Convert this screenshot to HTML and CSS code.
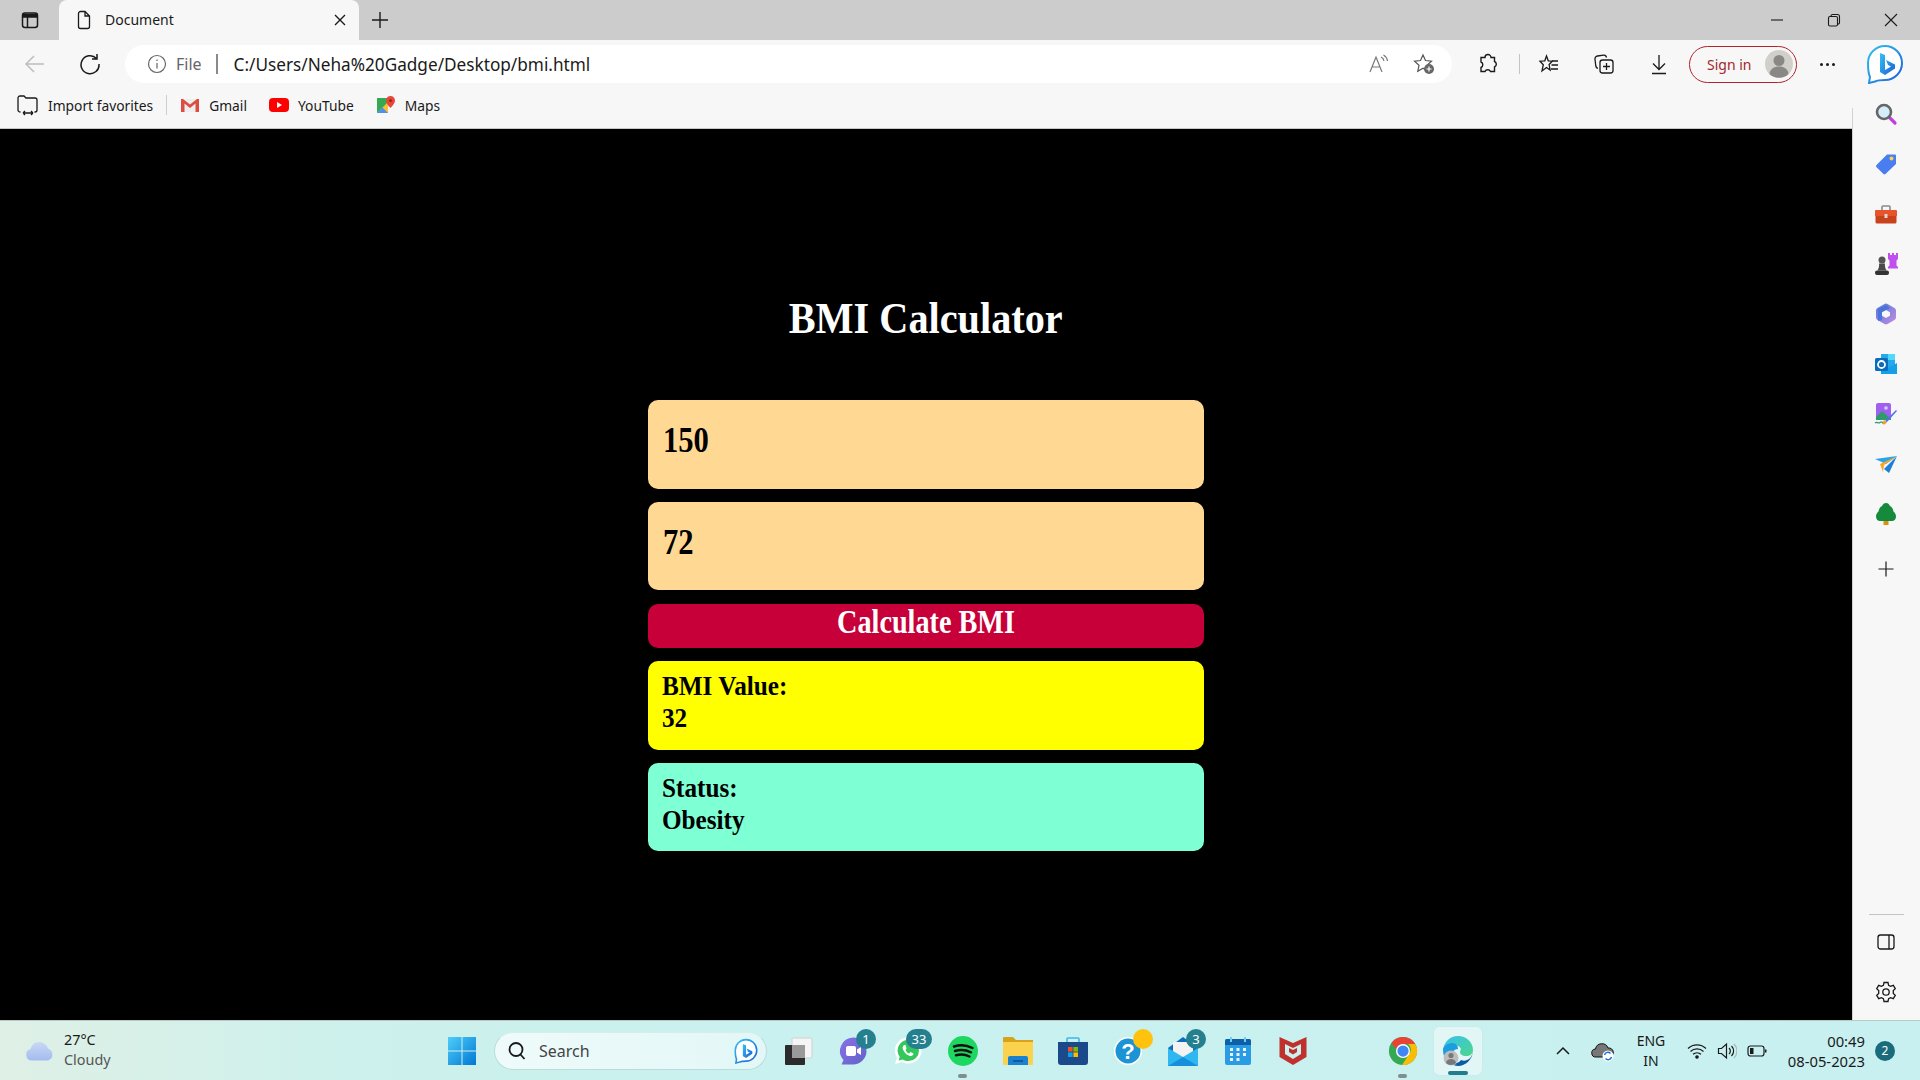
FILE: index.html
```html
<!DOCTYPE html>
<html lang="en">
<head>
    <meta charset="UTF-8">
    <title>Document</title>
    <link rel="stylesheet" href="styles.css">
</head>
<body>
    <svg class="defs" width="0" height="0">
        <defs>
            <linearGradient id="bing-grad" x1="0" y1="0" x2="1" y2="1">
                <stop offset="0" stop-color="#35c1f1"/>
                <stop offset="1" stop-color="#1b5fd8"/>
            </linearGradient>
            <linearGradient id="win-grad" x1="0" y1="0" x2="1" y2="1">
                <stop offset="0" stop-color="#4fcdf9"/>
                <stop offset="1" stop-color="#0078d4"/>
            </linearGradient>
            <linearGradient id="cloud-grad" x1="0" y1="0" x2="0" y2="1">
                <stop offset="0" stop-color="#c9d9f5"/>
                <stop offset="1" stop-color="#a3bcee"/>
            </linearGradient>
            <linearGradient id="m365-grad" x1="0" y1="0" x2="1" y2="1">
                <stop offset="0" stop-color="#4f7be0"/>
                <stop offset="1" stop-color="#c58be0"/>
            </linearGradient>
            <linearGradient id="purple-grad" x1="0" y1="0" x2="1" y2="1">
                <stop offset="0" stop-color="#8b6fe8"/>
                <stop offset="1" stop-color="#5f64c8"/>
            </linearGradient>
            <linearGradient id="edge-grad" x1="0" y1="0" x2="1" y2="1">
                <stop offset="0" stop-color="#35c1f1"/>
                <stop offset="1" stop-color="#4ed68a"/>
            </linearGradient>
        </defs>
    </svg>

    <div class="tabstrip">
        <div class="strip-btn">
            <svg class="ico-20" viewBox="0 0 20 20" fill="none" stroke="#1a1a1a" stroke-width="1.5"><rect x="2.5" y="3" width="15" height="14.5" rx="2.5"/><path d="M3 4.5h14v2.500H3z" fill="#1a1a1a"/><path d="M7.5 7v10"/></svg>
        </div>
        <div class="tab">
            <svg class="ico-20" viewBox="0 0 20 20" fill="none" stroke="#1a1a1a" stroke-width="1.3"><path d="M4.5 3.5a2 2 0 0 1 2-2H11l4.5 4.5v10.500a2 2 0 0 1-2 2h-7a2 2 0 0 1-2-2zM11 1.500V6h4.500"/></svg>
            <span class="tab-title">Document</span>
            <svg class="tab-close" viewBox="0 0 12 12" fill="none" stroke="#1a1a1a" stroke-width="1.4"><path d="M1 1l10 10M11 1L1 11"/></svg>
        </div>
        <div class="new-tab">
            <svg class="ico-20" viewBox="0 0 20 20" fill="none" stroke="#1a1a1a" stroke-width="1.4"><path d="M10 2v16M2 10h16"/></svg>
        </div>
        <div class="window-controls">
            <svg class="win-ctl" viewBox="0 0 14 14" fill="none" stroke="#1a1a1a" stroke-width="1.1"><path d="M1 7h12"/></svg>
            <svg class="win-ctl" viewBox="0 0 14 14" fill="none" stroke="#1a1a1a" stroke-width="1.1"><rect x="1.5" y="3.5" width="9" height="9.5" rx="1.5"/><path d="M4 3.500V3a1.500 1.500 0 0 1 1.500-1.500h5a2 2 0 0 1 2 2v6a1.500 1.500 0 0 1-2 1.500"/></svg>
            <svg class="win-ctl" viewBox="0 0 14 14" fill="none" stroke="#1a1a1a" stroke-width="1.1"><path d="M1 1l12 12M13 1L1 13"/></svg>
        </div>
    </div>

    <div class="toolbar">
        <div class="nav-btn">
            <svg class="ico-22" viewBox="0 0 22 22" fill="none" stroke="#bdbdbd" stroke-width="1.5"><path d="M20 11H2M10 3l-8 8 8 8"/></svg>
        </div>
        <div class="nav-btn nav-reload">
            <svg class="ico-22" viewBox="0 0 22 22" fill="none" stroke="#1a1a1a" stroke-width="1.5"><path d="M17.500 5.500A9 9 0 1 0 20 11M18 1v5h-5"/></svg>
        </div>
        <div class="address">
            <svg class="ico-20" viewBox="0 0 20 20" fill="none" stroke="#666" stroke-width="1.2"><circle cx="10" cy="10" r="8.5"/><path d="M10 9v5.500M10 5.500v1.600"/></svg>
            <span class="addr-file">File</span>
            <span class="addr-sep"></span>
            <span class="addr-url">C:/Users/Neha%20Gadge/Desktop/bmi.html</span>
            <div class="addr-actions">
                <div class="addr-btn">
                    <svg class="ico-22" viewBox="0 0 22 22" fill="none" stroke="#777" stroke-width="1.2"><path d="M2 19L8 4l6 15M4.500 14h7M13 4a5 5 0 0 1 3 4M15.500 2a8 8 0 0 1 4 6"/></svg>
                </div>
                <div class="addr-btn">
                    <svg class="ico-22" viewBox="0 0 22 22"><path d="M10 2l2.500 5.500 6 .7-4.500 4 1.200 6-5.200-3-5.200 3 1.200-6-4.500-4 6-.7z" fill="none" stroke="#555" stroke-width="1.2"/><circle cx="16" cy="16" r="5" fill="#666"/><path d="M16 13.500v5M13.500 16h5" stroke="#fff" stroke-width="1.2"/></svg>
                </div>
            </div>
        </div>
        <div class="tool-ext">
            <svg class="ico-22" viewBox="0 0 22 22" fill="none" stroke="#1a1a1a" stroke-width="1.4"><path d="M8 4.500a3 3 0 0 1 6 0h3.500v4a3 3 0 0 1 0 5.500v4.500h-4a3 3 0 0 0-5.500 0h-4v-4a3 3 0 0 0 0-5.500v-4.500z"/></svg>
        </div>
        <span class="tool-divider"></span>
        <div class="tool-btn">
            <svg class="ico-22" viewBox="0 0 22 22" fill="none" stroke="#1a1a1a" stroke-width="1.3"><path d="M8.500 3l1.800 4.800 4 .4-3.200 3.300 1 5.500-3.600-2.500-4.500 3.500 1.300-6.300L2 8.200l4.800-.4zM14 8h6M13.500 12H20M13 16h7"/></svg>
        </div>
        <div class="tool-btn">
            <svg class="ico-22" viewBox="0 0 22 22" fill="none" stroke="#1a1a1a" stroke-width="1.3"><rect x="7" y="7" width="13" height="13" rx="2.5"/><path d="M13.500 10v7M10 13.500h7M5 15.500c-1.500-.5-2-1.500-2.200-2.500L2 6.500A3 3 0 0 1 4.500 3l6-.8c1.500-.2 2.700.8 3 2.300"/></svg>
        </div>
        <div class="tool-btn">
            <svg class="ico-22" viewBox="0 0 22 22" fill="none" stroke="#1a1a1a" stroke-width="1.3"><path d="M11 2v14M5 10.500l6 6 6-6M4 20.500h14"/></svg>
        </div>
        <div class="signin">
            <span>Sign in</span>
            <svg class="signin-avatar" viewBox="0 0 28 28"><circle cx="14" cy="14" r="14" fill="#d1cfca"/><circle cx="14" cy="10.500" r="5.500" fill="#8a8884"/><path d="M4.500 24c.5-5 4.500-7.500 9.500-7.500s9 2.500 9.500 7.500a14 14 0 0 1-19 0z" fill="#8a8884"/></svg>
        </div>
        <div class="tool-more"><i></i><i></i><i></i></div>
        <div class="tool-bing">
            <svg class="bing-big" viewBox="0 0 38 40"><path d="M19 2a17 17 0 0 1 0 34c-4 0-7 0-10 1.500L3 39l1-6C2.500 30 2 25 2 19A17 17 0 0 1 19 2z" fill="#fff" stroke="url(#bing-grad)" stroke-width="2"/><path d="M14 9l5 2v15l6-3.500-3-1.500-2-5 9 4.500v4L19 31l-5-3z" fill="url(#bing-grad)"/></svg>
        </div>
    </div>

    <div class="browser-row">
        <div class="content-col">
            <div class="bookmarks">
                <div class="bm bm-import">
                    <svg class="ico-22" viewBox="0 0 22 22" fill="none" stroke="#1a1a1a" stroke-width="1.3"><path d="M3.500 18H3a2 2 0 0 1-2-2V4a2 2 0 0 1 2-2h4l2 2h9a2 2 0 0 1 2 2v10a2 2 0 0 1-2 2h-.5M6 19h10M6 19l2-2M6 19l2 2M16 19l-2-2M16 19l-2 2"/></svg>
                    <span>Import favorites</span>
                </div>
                <span class="bm-divider"></span>
                <div class="bm bm-gmail">
                    <svg class="ico-20" viewBox="0 0 20 20"><path d="M1 4h18v13H1z" fill="#eee"/><path d="M1 4v13h3.500V8.500L10 13l5.500-4.500V17H19V4h-2l-7 5.500L3 4z" fill="#dc4e41"/></svg>
                    <span>Gmail</span>
                </div>
                <div class="bm bm-yt">
                    <svg class="ico-20" viewBox="0 0 20 20"><rect y="3" width="20" height="14" rx="4" fill="#f00"/><path d="M8 7l5 3-5 3z" fill="#fff"/></svg>
                    <span>YouTube</span>
                </div>
                <div class="bm bm-maps">
                    <svg class="ico-20" viewBox="0 0 20 20"><path d="M1 3h11v15H1z" fill="#35a853"/><path d="M1 18L12 7v11z" fill="#fbc02d"/><path d="M1 18l5.500-5.500L12 18z" fill="#4c8df6"/><path d="M14.500 1a4.500 4.500 0 0 0-4.500 4.500c0 3 4.500 7.500 4.500 7.500S19 8.500 19 5.500A4.500 4.500 0 0 0 14.500 1z" fill="#e8453c"/><circle cx="14.500" cy="5.500" r="1.600" fill="#a52714"/></svg>
                    <span>Maps</span>
                </div>
            </div>
            <main class="page">
                <h1 class="page-title"><span>BMI Calculator</span></h1>
                <div class="card card-input"><span class="big-val">150</span></div>
                <div class="card card-input"><span class="big-val">72</span></div>
                <button class="card calc-btn"><span>Calculate BMI</span></button>
                <div class="card card-bmi"><span class="res-line">BMI Value:</span><span class="res-line">32</span></div>
                <div class="card card-status"><span class="res-line">Status:</span><span class="res-line">Obesity</span></div>
            </main>
        </div>
        <aside class="sidebar">
            <div class="side-btn">
                <svg class="ico-24" viewBox="0 0 24 24"><path d="M14 14l7 7" stroke="#c03fe0" stroke-width="3.2" stroke-linecap="round"/><circle cx="10" cy="10" r="7" fill="#d5ecfa" stroke="#666" stroke-width="2.6"/></svg>
            </div>
            <div class="side-btn">
                <svg class="ico-24" viewBox="0 0 24 24"><path d="M13 2.500h8a1 1 0 0 1 1 1V12L11.500 22a1.500 1.500 0 0 1-2 0l-7-6.800a1.500 1.500 0 0 1 0-2.200z" fill="#4a7df0"/><circle cx="17.500" cy="6.500" r="2" fill="#f4d44a"/></svg>
            </div>
            <div class="side-btn">
                <svg class="ico-24" viewBox="0 0 24 24"><path d="M8 8V5a1 1 0 0 1 1-1h6a1 1 0 0 1 1 1v3" fill="none" stroke="#8a8a8a" stroke-width="1.6"/><path d="M1 9a1 1 0 0 1 1-1h20a1 1 0 0 1 1 1v5H1z" fill="#e8542a"/><path d="M1.500 14h21v6a1.500 1.500 0 0 1-1.500 1.500H3A1.500 1.500 0 0 1 1.500 20z" fill="#c8431c"/><rect x="10.500" y="12" width="3" height="4" fill="#d8d8d8"/></svg>
            </div>
            <div class="side-btn">
                <svg class="ico-24" viewBox="0 0 24 24"><path d="M14 1h2v2h2V1h2v2h2V1h2v6l-1.500 1.500v5l1.500 1.500v1.500H14V15l1.500-1.500v-5L14 7z" fill="#c14ff0"/><circle cx="8" cy="8" r="3.500" fill="#555"/><path d="M5 11.500h6c-.5 3 .5 5 1.500 7h-9c1-2 2-4 1.500-7z" fill="#4a4a4a"/><rect x="1" y="18.500" width="14" height="4.500" rx="2" fill="#333"/></svg>
            </div>
            <div class="side-btn">
                <svg class="ico-24" viewBox="0 0 24 24"><path d="M10.500 2a3 3 0 0 1 3 0l7 4a3 3 0 0 1 1.500 2.500v7a3 3 0 0 1-1.500 2.500l-7 4a3 3 0 0 1-3 0l-7-4A3 3 0 0 1 2 15.500v-7A3 3 0 0 1 3.500 6z" fill="url(#m365-grad)"/><path d="M12 8l4 2.300v3.400L12 16l-4-2.300v-3.400z" fill="#f7f7f7"/><path d="M4 7l8-4 4 3-8 4v8l-4 1z" fill="#3f6fd8" opacity=".75"/></svg>
            </div>
            <div class="side-btn">
                <svg class="ico-24" viewBox="0 0 24 24"><path d="M7 2h14v20H7z" fill="#28a8ea"/><path d="M14 2h7v6h-7z" fill="#50d9ff"/><path d="M7 12l7 4 9-5v11H7z" fill="#14a0e8"/><rect x="1" y="6" width="13" height="13" rx="1.5" fill="#0a6cbd"/><circle cx="7.5" cy="12.5" r="3.500" fill="none" stroke="#fff" stroke-width="1.8"/></svg>
            </div>
            <div class="side-btn">
                <svg class="ico-24" viewBox="0 0 24 24"><rect x="2" y="1" width="15" height="17" rx="2" fill="#a060ef"/><path d="M2 15l6-6 9 8v1H2z" fill="#2f9a6c"/><circle cx="12" cy="6" r="1.800" fill="#e0c4ff"/><path d="M11 19L22 8l1 1-10 11z" fill="#5570f0"/><path d="M10 18l3 2.500-2.500 2-2.500-.5z" fill="#f0a020"/><path d="M1 21c2-2 3 1 5-.5s2 .5 3 0" fill="none" stroke="#2f9a6c" stroke-width="1.2"/></svg>
            </div>
            <div class="side-btn">
                <svg class="ico-24" viewBox="0 0 24 24"><path d="M1 7l22-3-11 8z" fill="#2aa3ee"/><path d="M23 4l-8 17-5-4z" fill="#1b7fd8"/><path d="M23 4L6 12l3 8 1-7z" fill="#f5a623"/></svg>
            </div>
            <div class="side-btn">
                <svg class="ico-24" viewBox="0 0 24 24"><rect x="9.5" y="18" width="5" height="5" fill="#d99010"/><path d="M12 1c2 0 3 1 4 3 2 1 3 3 3.500 5.500 1.500 1 2.500 3 2.500 5 0 3-2 4.500-4 4.500H6c-2 0-4-1.500-4-4.500 0-2 1-4 2.500-5C5 7 6 5 8 4c1-2 2-3 4-3z" fill="#168a3c"/></svg>
            </div>
            <div class="side-btn side-plus">
                <svg class="ico-20" viewBox="0 0 20 20" fill="none" stroke="#1a1a1a" stroke-width="1.2"><path d="M10 2.500v15M2.500 10h15"/></svg>
            </div>
            <div class="side-foot">
                <span class="side-line"></span>
                <div class="side-btn">
                    <svg class="ico-20" viewBox="0 0 20 20" fill="none" stroke="#1a1a1a" stroke-width="1.3"><rect x="2" y="3" width="16" height="14" rx="2.5"/><path d="M13 3v14"/></svg>
                </div>
                <div class="side-btn">
                    <svg class="ico-24" viewBox="0 0 24 24" fill="none" stroke="#1a1a1a" stroke-width="1.3"><circle cx="12" cy="12" r="3.2"/><path d="M10 2.500h4l.6 2.800 2 1 2.700-1 2 3.400-2 1.900v2.800l2 1.900-2 3.400-2.700-1-2 1-.6 2.800h-4l-.6-2.800-2-1-2.700 1-2-3.400 2-1.900V10.600l-2-1.900 2-3.400 2.700 1 2-1z"/></svg>
                </div>
            </div>
        </aside>
    </div>

    <footer class="taskbar">
        <div class="weather">
            <svg class="weather-ico" viewBox="0 0 30 20"><path d="M7 19.500a5.800 5.800 0 0 1-1.500-11.400 9 9 0 0 1 17.500-.6A6.300 6.300 0 0 1 23 19.500z" fill="url(#cloud-grad)"/></svg>
            <div class="weather-text">
                <span>27°C</span>
                <span class="weather-sub">Cloudy</span>
            </div>
        </div>
        <div class="app">
            <svg class="ico-30" viewBox="0 0 30 30" fill="url(#win-grad)"><path d="M1 1h13.500v13.500H1zM15.500 1H29v13.500H15.500zM1 15.500h13.500V29H1zM15.500 15.500H29V29H15.500z"/></svg>
        </div>
        <div class="search">
            <svg class="ico-20" viewBox="0 0 20 20" fill="none" stroke="#1a1a1a" stroke-width="1.8"><circle cx="9" cy="8.5" r="6.5"/><path d="M13.500 13.500l4 4.500"/></svg>
            <span class="search-text">Search</span>
            <svg class="search-bing" viewBox="0 0 38 40"><path d="M19 2a17 17 0 0 1 0 34c-4 0-7 0-10 1.500L3 39l1-6C2.500 30 2 25 2 19A17 17 0 0 1 19 2z" fill="#fff" stroke="url(#bing-grad)" stroke-width="2.5"/><path d="M14 9l5 2v15l6-3.500-3-1.500-2-5 9 4.500v4L19 31l-5-3z" fill="url(#bing-grad)"/></svg>
        </div>
        <div class="app app-first">
            <svg class="ico-30" viewBox="0 0 30 30"><rect x="9" y="2" width="20" height="20" rx="1" fill="#f5f5f5" stroke="#d0d0d0"/><rect x="2" y="9" width="20" height="20" rx="1" fill="#2b2b2b"/><rect x="9" y="9" width="13" height="13" fill="#9a9a9a"/></svg>
        </div>
        <div class="app">
            <svg class="ico-30" viewBox="0 0 30 30"><path d="M15 1.500a13.500 13.500 0 0 1 0 27H3.500l2-4.500A13.500 13.500 0 0 1 15 1.500z" fill="url(#purple-grad)"/><rect x="8" y="10" width="10" height="10" rx="2" fill="#fff"/><path d="M19 13.500l4-2.500v8l-4-2.500z" fill="#fff"/></svg>
            <span class="badge badge-teams">1</span>
        </div>
        <div class="app">
            <svg class="ico-30" viewBox="0 0 30 30"><path d="M15.500 1.500a13 13 0 0 1 0 26c-2.500 0-4.500-.5-6.500-1.500L2 28l2-6.500A13 13 0 0 1 15.500 1.500z" fill="#fff"/><path d="M15.500 4a10.500 10.500 0 0 1 0 21c-2.200 0-4-.5-5.800-1.500l-4 1 1-3.800A10.500 10.500 0 0 1 15.500 4z" fill="#33c75c"/><path d="M11 9c-1.500 1-2 3-.5 5.500 1.500 3 4 5 6.500 5.500 2 .3 3.500-1 3.500-2.500l-3-1.500-1.500 1.500c-1.500-.5-3-2-3.500-3.500l1-1.500L12.500 9z" fill="#fff"/></svg>
            <span class="badge badge-wa">33</span>
        </div>
        <div class="app">
            <svg class="ico-30" viewBox="0 0 30 30" fill="none"><circle cx="15" cy="15" r="15" fill="#1ed760"/><path d="M6 10.500c6-1.800 13-1.300 18.500 1.500M7 15c5-1.400 11-1 16 1.300M8 19.300c4.500-1.100 9.500-.8 13.500 1.200" stroke="#111" stroke-width="2.5" stroke-linecap="round"/></svg>
            <span class="app-dot"></span>
        </div>
        <div class="app">
            <svg class="ico-30" viewBox="0 0 30 30"><path d="M0 2a1 1 0 0 1 1-1h9l3 3h17v6H0z" fill="#d9a21b"/><path d="M0 6h30v22a1 1 0 0 1-1 1H1a1 1 0 0 1-1-1z" fill="#fbd24e"/><path d="M5 29v-7a2 2 0 0 1 2-2h16a2 2 0 0 1 2 2v7z" fill="#1a80d0"/><path d="M10 25h10" stroke="#0b4f8f" stroke-width="1.5"/></svg>
        </div>
        <div class="app">
            <svg class="ico-30" viewBox="0 0 30 30"><path d="M9 6V3a1 1 0 0 1 1-1h10a1 1 0 0 1 1 1v3" fill="none" stroke="#3cb8e8" stroke-width="1.6"/><path d="M0 6h30v20a3 3 0 0 1-3 3H3a3 3 0 0 1-3-3z" fill="#1a4a8a"/><rect x="10" y="11" width="4.6" height="4.6" fill="#f25022"/><rect x="15.4" y="11" width="4.6" height="4.6" fill="#7fba00"/><rect x="10" y="16.4" width="4.6" height="4.6" fill="#00a4ef"/><rect x="15.4" y="16.4" width="4.6" height="4.6" fill="#ffb900"/></svg>
        </div>
        <div class="app">
            <svg class="ico-30" viewBox="0 0 30 30"><circle cx="15" cy="15" r="14" fill="#fff"/><circle cx="15" cy="15" r="12.5" fill="#1c93d4"/><text class="help-mark" x="15" y="23" text-anchor="middle">?</text></svg>
            <span class="badge badge-help"></span>
        </div>
        <div class="app">
            <svg class="ico-30" viewBox="0 0 30 30"><path d="M0 12L15 1l15 11v18H0z" fill="#0f6cbd"/><path d="M5 6h20v13l-10 6-10-6z" fill="#f2f2f2"/><path d="M0 12l15 9 15-9v18H0z" fill="#2fb8ef"/><path d="M0 30l15-9 15 9z" fill="#1690dc"/></svg>
            <span class="badge badge-mail">3</span>
        </div>
        <div class="app">
            <svg class="ico-30" viewBox="0 0 30 30"><rect x="2" y="3" width="26" height="26" rx="2" fill="#2a9be5"/><path d="M2 5a2 2 0 0 1 2-2h22a2 2 0 0 1 2 2v4H2z" fill="#0f5fa8"/><path d="M8 1v5M22 1v5" stroke="#6cd0f5" stroke-width="2"/><path d="M7 12h3v3H7zM13.500 12h3v3h-3zM20 12h3v3h-3zM7 17h3v3H7zM13.500 17h3v3h-3zM20 17h3v3h-3zM7 22h3v3H7zM13.500 22h3v3h-3z" fill="#e6f4fd"/></svg>
        </div>
        <div class="app">
            <svg class="ico-30" viewBox="0 0 30 30"><path d="M1.500 1L15 7 28.500 1v20L15 29 1.500 21z" fill="#c0312e"/><path d="M7 8l8 4 8-4v10l-8 5-8-5z" fill="#c9f1ef"/><path d="M11 12l4 2 4-2v4l-4 2.500-4-2.500z" fill="#c0312e"/></svg>
        </div>
        <div class="app app-chrome">
            <svg class="ico-30" viewBox="0 0 32 32"><circle cx="16" cy="16" r="15" fill="#34a853"/><path d="M16 1a15 15 0 0 1 13 7.500H16a7.500 7.500 0 0 0-7 5L3.500 7.700A15 15 0 0 1 16 1z" fill="#ea4335"/><path d="M29 8.500A15 15 0 0 1 15 31l7-11a7.500 7.500 0 0 0-.5-11.500z" fill="#fbbc04"/><circle cx="16" cy="16" r="7.500" fill="#fff"/><circle cx="16" cy="16" r="6" fill="#4285f4"/></svg>
            <span class="app-dot"></span>
        </div>
        <div class="app">
            <div class="edge-tile">
                <svg class="ico-32" viewBox="0 0 32 32"><path d="M1 15C2 7 8 1 16 1c8 0 15 6 15 14 0 4-3 6-7 6s-6-2-6-4c0-1 .5-2 1-3-1-3-4-4-7-3-5 1-9 5-11 4z" fill="url(#edge-grad)"/><path d="M31 17c-1 7-7 14-15 14-3 0-5-1-7-3 4 1 8 0 10-3 2 1 4 1 6 0 3-1 5-4 6-8z" fill="#0c59a4"/><path d="M1 15c0-3 4-7 9-7 4 0 6 3 6 6-4 0-6 3-6 7 0 4 2 7 5 9C7 30 1 24 1 15z" fill="#1b9de2"/><circle cx="9" cy="23" r="7.5" fill="#bdbdbd"/><circle cx="9" cy="20.5" r="2.6" fill="#777"/><path d="M4 28c.5-3 2.500-4 5-4s4.500 1 5 4a7.500 7.500 0 0 1-10 0z" fill="#777"/></svg>
                <span class="edge-bar"></span>
            </div>
        </div>
        <div class="tray">
            <div class="tray-ico">
                <svg class="ico-16" viewBox="0 0 16 16" fill="none" stroke="#1a1a1a" stroke-width="1.5"><path d="M2 11l6-6 6 6"/></svg>
            </div>
            <div class="tray-ico tray-cloud">
                <svg class="ico-24" viewBox="0 0 24 24"><path d="M5 18a4 4 0 0 1-.5-8 6.500 6.500 0 0 1 12.500-1 4.500 4.500 0 0 1 1.500 9z" fill="#777" stroke="#111" stroke-width="1"/><circle cx="17" cy="17" r="5.500" fill="#fff"/><path d="M13.500 16a3.500 3.500 0 0 1 6-1.500M20.500 18a3.500 3.500 0 0 1-6 1.500" fill="none" stroke="#1a6fd0" stroke-width="1.4"/></svg>
            </div>
            <div class="tray-lang"><span>ENG</span><span>IN</span></div>
            <div class="tray-ico tray-wifi">
                <svg class="ico-20" viewBox="0 0 20 20" fill="none" stroke="#1a1a1a" stroke-width="1.2"><path d="M1 7.500a13 13 0 0 1 18 0M3.500 10.500a9.500 9.500 0 0 1 13 0M6 13.300a6 6 0 0 1 8 0"/><circle cx="10" cy="16" r="1.200" fill="#1a1a1a"/></svg>
            </div>
            <div class="tray-ico">
                <svg class="ico-20" viewBox="0 0 20 20" fill="none" stroke="#1a1a1a" stroke-width="1.2"><path d="M1.500 7.500h3L9.500 3v14l-5-4.500h-3zM12 7a4 4 0 0 1 0 6M14.500 5a7 7 0 0 1 0 10"/><path d="M17 3a10 10 0 0 1 0 14" stroke="#b0b8b8"/></svg>
            </div>
            <div class="tray-ico">
                <svg class="ico-20" viewBox="0 0 20 20"><rect x="1" y="5" width="16" height="10" rx="2.5" fill="none" stroke="#1a1a1a" stroke-width="1.2"/><rect x="3" y="7" width="3.5" height="6" fill="#1a1a1a"/><rect x="18" y="8.500" width="1.5" height="3" fill="#1a1a1a"/></svg>
            </div>
            <div class="tray-clock"><span>00:49</span><span>08-05-2023</span></div>
            <span class="tray-count">2</span>
        </div>
    </footer>
</body>
</html>
```

FILE: styles.css
```css
* {
    box-sizing: border-box;
}

html, body {
    height: 100%;
}

body {
    margin: 0;
    display: flex;
    flex-direction: column;
    height: 1080px;
    overflow: hidden;
    font-family: "Noto Sans", "Open Sans", sans-serif;
    color: #1a1a1a;
    background: #f7f7f7;
}

svg {
    display: block;
    flex: none;
}

.defs {
    position: absolute;
}

.ico-16 { width: 16px; height: 16px; }
.ico-20 { width: 20px; height: 20px; }
.ico-22 { width: 22px; height: 22px; }
.ico-24 { width: 24px; height: 24px; }
.ico-30 { width: 30px; height: 30px; }
.ico-32 { width: 32px; height: 32px; }

/* tab strip */
.tabstrip {
    height: 40px;
    display: flex;
    align-items: center;
    background: #cccccc;
    flex: none;
}

.strip-btn {
    width: 59px;
    display: flex;
    justify-content: center;
}

.tab {
    width: 300px;
    height: 40px;
    display: flex;
    align-items: center;
    background: #f7f7f7;
    border-radius: 8px 8px 0 0;
    padding-left: 15px;
}

.tab-title {
    margin: 0 0 2px 11px;
    font-size: 14px;
}

.tab-close {
    width: 12px;
    height: 12px;
    margin-left: auto;
    margin-right: 13px;
}

.new-tab {
    width: 42px;
    display: flex;
    justify-content: center;
}

.window-controls {
    margin-left: auto;
    display: flex;
    padding-right: 22px;
    gap: 43px;
}

.win-ctl {
    width: 14px;
    height: 14px;
}

/* toolbar */
.toolbar {
    height: 48px;
    display: flex;
    align-items: center;
    padding-left: 15px;
    background: #f7f7f7;
    flex: none;
}

.nav-btn {
    width: 40px;
    display: flex;
    justify-content: center;
}

.nav-reload {
    margin-left: 15px;
}

.address {
    width: 1327px;
    height: 38px;
    margin-left: 15px;
    display: flex;
    align-items: center;
    padding-left: 22px;
    background: #fff;
    border-radius: 19px;
}

.addr-file {
    margin-left: 9px;
    font-size: 16px;
    color: #666;
}

.addr-sep {
    width: 2px;
    height: 20px;
    margin-left: 14px;
    background: #8a8a8a;
}

.addr-url {
    margin-left: 16px;
    font-size: 17.2px;
}

.addr-actions {
    margin-left: auto;
    display: flex;
    padding-right: 6px;
}

.addr-btn {
    width: 45px;
    display: flex;
    justify-content: center;
}

.tool-ext {
    width: 62px;
    margin-left: 5px;
    display: flex;
    justify-content: center;
}

.tool-divider {
    width: 1px;
    height: 20px;
    background: #c4c4c4;
    margin-right: 1px;
}

.tool-btn {
    width: 55px;
    display: flex;
    justify-content: center;
}

.signin {
    width: 108px;
    height: 37px;
    margin-left: 3px;
    display: flex;
    align-items: center;
    justify-content: space-between;
    padding: 0 3px 0 17px;
    border: 1.5px solid #b3232b;
    border-radius: 19px;
    font-size: 14px;
    color: #a4262c;
}

.signin-avatar {
    width: 28px;
    height: 28px;
}

.tool-more {
    width: 36px;
    margin-left: 12px;
    display: flex;
    justify-content: center;
    gap: 3px;
}

.tool-more i {
    width: 3px;
    height: 3px;
    border-radius: 50%;
    background: #1a1a1a;
}

.tool-bing {
    margin-left: 21px;
}

.bing-big {
    width: 38px;
    height: 40px;
}

/* middle part */
.browser-row {
    flex: 1;
    display: flex;
    min-height: 0;
}

.content-col {
    flex: 1;
    display: flex;
    flex-direction: column;
}

.bookmarks {
    height: 41px;
    flex: none;
    display: flex;
    align-items: center;
    padding-left: 17px;
    padding-bottom: 6px;
    border-bottom: 1px solid #c8c8c8;
    font-size: 13.8px;
}

.bm {
    display: flex;
    align-items: center;
}

.bm svg {
    margin-right: 9px;
}

.bm-divider {
    width: 1px;
    height: 20px;
    margin: 0 13px;
    background: #cfcfcf;
}

.bm-yt {
    margin-left: 22px;
}

.bm-maps {
    margin-left: 22px;
}

.page {
    flex: 1;
    display: flex;
    flex-direction: column;
    align-items: center;
    padding-top: 165px;
    gap: 13px;
    background: #000;
    font-family: "Liberation Serif", serif;
    font-weight: bold;
    color: #000;
}

.page-title {
    margin: 0 0 43px;
    font-size: 44px;
    line-height: 50px;
    color: #fff;
}

.page-title span {
    display: block;
    transform: scaleX(.915);
}

.card {
    width: 556px;
    height: 89px;
    flex: none;
    border: none;
    border-radius: 10px;
    font-family: inherit;
    font-weight: inherit;
}

.card-input {
    background: #ffd994;
    padding: 20px 15px 0;
}

.card-input + .card-input {
    height: 88px;
    margin-bottom: 1px;
}

.big-val {
    display: inline-block;
    font-size: 36px;
    line-height: 40px;
    transform: scaleX(.85);
    transform-origin: left center;
}

.calc-btn {
    height: 44px;
    padding: 0;
    display: block;
    text-align: center;
    background: #c70039;
    color: #fff;
    font-size: 33px;
    line-height: 36px;
}

.calc-btn span {
    display: block;
    height: 44px;
    transform: scaleX(.855);
}

.card-bmi {
    background: #ffff00;
    padding: 9px 14px 0;
}

.card-status {
    height: 88px;
    background: #7fffd4;
    padding: 9px 14px 0;
}

.res-line {
    display: block;
    font-size: 28px;
    line-height: 32px;
    transform: scaleX(.9);
    transform-origin: left center;
}

/* edge sidebar */
.sidebar {
    position: relative;
    width: 68px;
    flex: none;
    display: flex;
    flex-direction: column;
    align-items: center;
    padding: 1px 0 3px;
    background: #f7f7f7;
}

.sidebar::before {
    content: "";
    position: absolute;
    left: 0;
    top: 20px;
    bottom: 0;
    width: 1px;
    background: #d2d2d2;
}

.side-btn {
    width: 50px;
    height: 50px;
    display: flex;
    align-items: center;
    justify-content: center;
    flex: none;
}

.side-plus {
    margin-top: 5px;
}

.side-foot {
    margin-top: auto;
    display: flex;
    flex-direction: column;
    align-items: center;
}

.side-line {
    width: 35px;
    height: 1px;
    margin-bottom: 2px;
    background: #c4c4c4;
}

/* taskbar */
.taskbar {
    height: 60px;
    flex: none;
    display: flex;
    align-items: center;
    border-top: 1px solid #b9c9c7;
    background: linear-gradient(90deg, #dff0e6 0, #cdf1ec 18%, #c9f1ef 40%, #c9f0f0 100%);
}

.weather {
    width: 434px;
    display: flex;
    align-items: center;
    padding-left: 25px;
}

.weather-ico {
    width: 30px;
    height: 20px;
}

.weather-text {
    margin: -2px 0 0 9px;
    display: flex;
    flex-direction: column;
    font-size: 14.4px;
    line-height: 20px;
}

.weather-sub {
    color: #555;
}

.app {
    position: relative;
    width: 55px;
    height: 58px;
    display: flex;
    align-items: center;
    justify-content: center;
    flex: none;
}

.app-first {
    margin-left: 3px;
}

.app-chrome {
    margin-left: 55px;
}

.app-dot {
    position: absolute;
    left: 23px;
    bottom: 2px;
    width: 9px;
    height: 4px;
    border-radius: 2px;
    background: #7d8f8f;
}

.badge {
    position: absolute;
    top: 7px;
    left: 31px;
    width: 20px;
    height: 20px;
    display: flex;
    align-items: center;
    justify-content: center;
    border-radius: 10px;
    background: #24808f;
    color: #fff;
    font-size: 13px;
}

.badge-wa {
    left: 26px;
    width: 26px;
}

.badge-help {
    left: 33px;
    background: #ffc20e;
}

.help-mark {
    font-family: "Liberation Sans", sans-serif;
    font-weight: bold;
    font-size: 22px;
    fill: #fff;
}

.search {
    width: 273px;
    height: 38px;
    margin-left: 5px;
    display: flex;
    align-items: center;
    padding: 0 8px 0 12px;
    background: linear-gradient(90deg, #eefbfa, #e3f7f7);
    border: 1px solid #b8dcdc;
    border-top-color: #d4eeee;
    border-radius: 19px;
}

.search-text {
    margin-left: 12px;
    font-size: 16px;
    color: #444;
}

.search-bing {
    width: 24px;
    height: 26px;
    margin-left: auto;
}

.edge-tile {
    position: relative;
    width: 48px;
    height: 48px;
    display: flex;
    align-items: center;
    justify-content: center;
    background: #e3f6f6;
    border-radius: 5px;
    box-shadow: 0 0 1px #b8d4d4;
}

.edge-bar {
    position: absolute;
    left: 14px;
    bottom: 0;
    width: 20px;
    height: 4px;
    border-radius: 2px;
    background: #1f7f8f;
}

.tray {
    margin-left: auto;
    display: flex;
    align-items: center;
    padding-right: 25px;
}

.tray-ico {
    width: 30px;
    display: flex;
    justify-content: center;
}

.tray-cloud {
    margin-left: 10px;
}

.tray-wifi {
    margin-left: 13px;
}

.tray-lang {
    width: 36px;
    margin-left: 15px;
    display: flex;
    flex-direction: column;
    align-items: center;
    font-size: 14px;
    line-height: 20px;
}

.tray-clock {
    width: 93px;
    display: flex;
    flex-direction: column;
    align-items: flex-end;
    font-size: 14.8px;
    line-height: 20px;
}

.tray-count {
    width: 20px;
    height: 20px;
    margin-left: 10px;
    display: flex;
    align-items: center;
    justify-content: center;
    border-radius: 50%;
    background: #1a6b7c;
    color: #fff;
    font-size: 12px;
}
```
